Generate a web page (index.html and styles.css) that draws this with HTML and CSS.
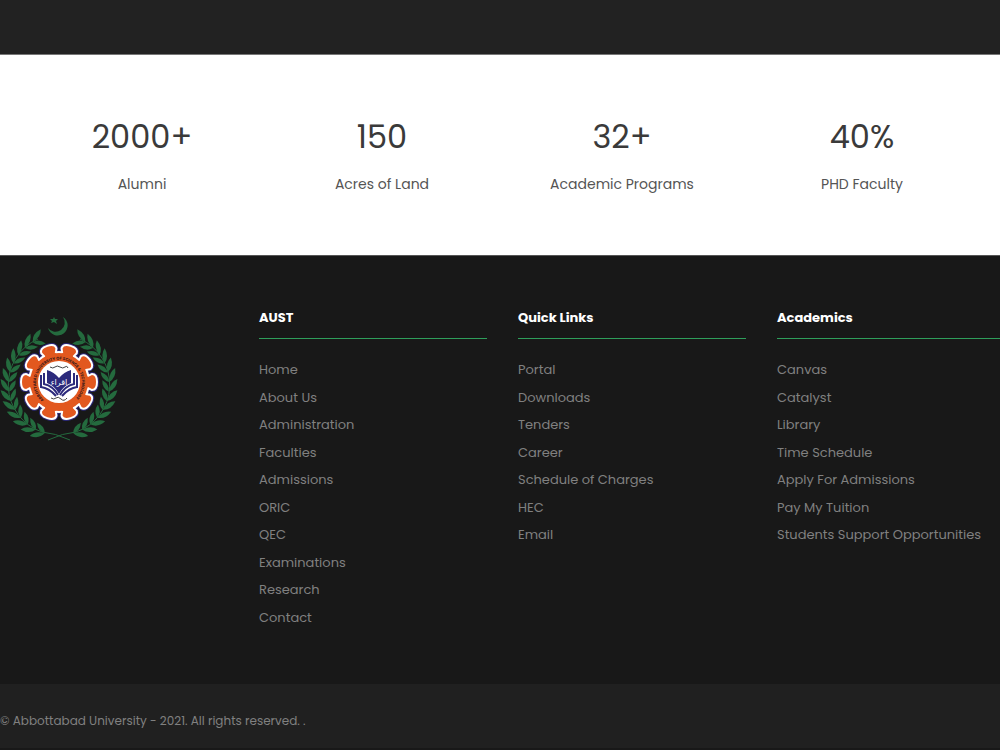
FILE: index.html
```
<!DOCTYPE html>
<html lang="en">
<head>
  <meta charset="UTF-8" />
  <meta name="viewport" content="width=device-width, initial-scale=1.0" />
  <title>Abbottabad University</title>
  <link rel="stylesheet" href="styles.css">
</head>
<body>

  <div class="banner"></div>

  <section class="stats">
    <div class="stat">
      <div class="stat-number">2000+</div>
      <div class="stat-label">Alumni</div>
    </div>
    <div class="stat">
      <div class="stat-number">150</div>
      <div class="stat-label">Acres of Land</div>
    </div>
    <div class="stat">
      <div class="stat-number">32+</div>
      <div class="stat-label">Academic Programs</div>
    </div>
    <div class="stat">
      <div class="stat-number">40%</div>
      <div class="stat-label">PHD Faculty</div>
    </div>
  </section>

  <footer>
    <div class="footer-columns">
      <div class="footer-logo">
        <svg class="logo" viewBox="0 -2 125 142" role="img" aria-label="University crest">
          <defs>
            <g id="leaves">
              <path d="M-4 -50 Q-1 -58 9 -58 Q6 -51 -4 -50Z" />
              <path d="M-4 -50 Q3 -51 7 -43 Q-1 -43 -4 -50Z" />
            </g>
            <g id="branch">
              <use href="#leaves" transform="rotate(-27)" />
              <use href="#leaves" transform="rotate(-38)" />
              <use href="#leaves" transform="rotate(-49)" />
              <use href="#leaves" transform="rotate(-60)" />
              <use href="#leaves" transform="rotate(-71)" />
              <use href="#leaves" transform="rotate(-82)" />
              <use href="#leaves" transform="rotate(-93)" />
              <use href="#leaves" transform="rotate(-104)" />
              <use href="#leaves" transform="rotate(-115)" />
              <use href="#leaves" transform="rotate(-126)" />
              <use href="#leaves" transform="rotate(-137)" />
              <use href="#leaves" transform="rotate(-148)" />
              <use href="#leaves" transform="rotate(-159)" />
              <path d="M-21 -46 A50 50 0 0 0 -17 47 Q-4 48 11 55" fill="none" stroke="#246b3e" stroke-width="1" />
            </g>
            <path id="tooth" d="M-9 -24 L-5 -29 L-7 -33 Q-7 -37 0 -37 Q7 -37 7 -33 L5 -29 L9 -24Z" />
            <g id="gear">
              <circle r="29" />
              <use href="#tooth" transform="rotate(18)" />
              <use href="#tooth" transform="rotate(54)" />
              <use href="#tooth" transform="rotate(90)" />
              <use href="#tooth" transform="rotate(126)" />
              <use href="#tooth" transform="rotate(162)" />
              <use href="#tooth" transform="rotate(198)" />
              <use href="#tooth" transform="rotate(234)" />
              <use href="#tooth" transform="rotate(270)" />
              <use href="#tooth" transform="rotate(306)" />
              <use href="#tooth" transform="rotate(342)" />
            </g>
            <path id="ring" d="M-15 18 A23 23 0 1 1 15 18" />
          </defs>

          <!-- crescent and star -->
          <path d="M48 18 A10 10 0 1 0 63 7 A8 8 0 1 1 48 18Z" fill="#246b3e" />
          <path d="M54 7 L55 9 L58 9 L56 11 L57 14 L54 12 L51 13 L52 11 L50 9 L53 9Z" fill="#246b3e" />

          <!-- wreath -->
          <g transform="translate(59 75)" fill="#246b3e">
            <use href="#branch" />
            <use href="#branch" transform="scale(-1 1)" />
          </g>

          <!-- gear -->
          <g transform="translate(59 72)">
            <use href="#gear" fill="#2c2a7c" stroke="#2c2a7c" stroke-width="6" stroke-linejoin="round" />
            <use href="#gear" fill="#fff" stroke="#fff" stroke-width="4" stroke-linejoin="round" />
            <use href="#gear" fill="#e2581f" />
            <circle r="21" fill="#fff" />
            <text class="logo-ring"><textPath href="#ring">ABBOTTABAD UNIVERSITY OF SCIENCE &amp; TECHNOLOGY</textPath></text>

            <!-- book -->
            <g fill="none" stroke="#2c2a7c" stroke-width="2">
              <path d="M-18 -7 V5 Q-10 6 -3 14" />
              <path d="M-15 -9 V2 Q-6 4 -1 13" />
              <path d="M18 -7 V5 Q10 6 3 14" />
              <path d="M15 -9 V2 Q6 4 1 13" />
            </g>
            <path d="M-12 -12 Q-5 -10 0 -4 Q5 -10 12 -12 V1 Q4 4 0 12 Q-4 4 -12 1Z" fill="#2c2a7c" />
            <text class="logo-word" y="3">اقراء</text>
            <path d="M-9 -15 Q-6 -13 -4 -15 T1 -15 T6 -15 T9 -14" fill="none" stroke="#444" stroke-width="1" />
            <path d="M-8 16 Q-5 18 -3 16 T2 17 T8 16" fill="none" stroke="#444" stroke-width="1" />
          </g>
        </svg>
      </div>

      <div class="footer-col">
        <h3>AUST</h3>
        <ul>
          <li><a href="#">Home</a></li>
          <li><a href="#">About Us</a></li>
          <li><a href="#">Administration</a></li>
          <li><a href="#">Faculties</a></li>
          <li><a href="#">Admissions</a></li>
          <li><a href="#">ORIC</a></li>
          <li><a href="#">QEC</a></li>
          <li><a href="#">Examinations</a></li>
          <li><a href="#">Research</a></li>
          <li><a href="#">Contact</a></li>
        </ul>
      </div>

      <div class="footer-col">
        <h3>Quick Links</h3>
        <ul>
          <li><a href="#">Portal</a></li>
          <li><a href="#">Downloads</a></li>
          <li><a href="#">Tenders</a></li>
          <li><a href="#">Career</a></li>
          <li><a href="#">Schedule of Charges</a></li>
          <li><a href="#">HEC</a></li>
          <li><a href="#">Email</a></li>
        </ul>
      </div>

      <div class="footer-col">
        <h3>Academics</h3>
        <ul>
          <li><a href="#">Canvas</a></li>
          <li><a href="#">Catalyst</a></li>
          <li><a href="#">Library</a></li>
          <li><a href="#">Time Schedule</a></li>
          <li><a href="#">Apply For Admissions</a></li>
          <li><a href="#">Pay My Tuition</a></li>
          <li><a href="#">Students Support Opportunities</a></li>
        </ul>
      </div>
    </div>

    <div class="copyright">© Abbottabad University - 2021. All rights reserved. .</div>
  </footer>

</body>
</html>
```
FILE: styles.css
```
* {
  box-sizing: border-box;
}

body {
  margin: 0;
  font-family: Poppins, Inter, "Liberation Sans", sans-serif;
  background: #181818;
}

.banner {
  height: 54px;
  background: #222;
}

.stats {
  display: grid;
  grid-template-columns: repeat(4, 1fr);
  padding: 60px 18px 59px 22px;
  border-top: 1px solid #777;
  border-bottom: 1px solid #555;
  background: #fff;
  text-align: center;
}

.stat-number {
  font-size: 32px;
  line-height: 44px;
  color: #3a3a3a;
}

.stat-label {
  margin-top: 13px;
  font-size: 14px;
  line-height: 24px;
  color: #555;
}

footer {
  overflow: hidden;
}

.footer-columns {
  display: grid;
  grid-template-columns: repeat(4, minmax(228px, 1fr));
  column-gap: 31px;
  padding: 52px 0 53px;
}

.logo {
  display: block;
  width: 125px;
  height: 142px;
}

.logo-ring {
  font-size: 4px;
  font-weight: 700;
  fill: #3a1a1a;
}

.logo-word {
  font-family: "DejaVu Sans", sans-serif;
  font-size: 8px;
  text-anchor: middle;
  fill: #fff;
}

.footer-col h3 {
  margin: 0;
  padding-bottom: 10px;
  border-bottom: 1px solid #2e9e5b;
  font-size: 13px;
  font-weight: 700;
  line-height: 20px;
  color: #fff;
}

.footer-col ul {
  margin: 17px 0 0;
  padding: 0;
  list-style: none;
}

.footer-col li {
  font-size: 13px;
  line-height: 27px;
}

.footer-col li:nth-child(odd) {
  margin-bottom: 1px;
}

.footer-col a {
  color: #808080;
  text-decoration: none;
}

.copyright {
  padding: 25px 0 15px;
  background: #202020;
  font-size: 12px;
  line-height: 24px;
  color: #808080;
}
```
